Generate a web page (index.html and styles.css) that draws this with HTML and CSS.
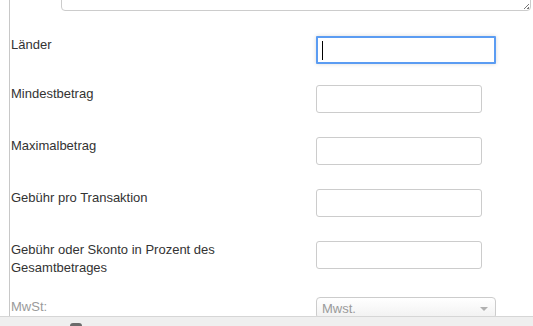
FILE: index.html
```html
<!DOCTYPE html>
<html lang="de">
<head>
    <meta charset="UTF-8" />
    <title>Zahlungsart bearbeiten</title>
    <link rel="stylesheet" href="styles.css">
</head>
<body>
<div class="panel">
    <div class="textarea-row">
        <div class="textarea"><span class="grip"></span></div>
    </div>

    <div class="form-row row-tight">
        <label class="label">Länder</label>
        <div class="field field-focus"><span class="caret"></span></div>
    </div>
    <div class="form-row">
        <label class="label">Mindestbetrag</label>
        <div class="field"></div>
    </div>
    <div class="form-row">
        <label class="label">Maximalbetrag</label>
        <div class="field"></div>
    </div>
    <div class="form-row">
        <label class="label">Gebühr pro Transaktion</label>
        <div class="field"></div>
    </div>
    <div class="form-row row-tight">
        <label class="label">Gebühr oder Skonto in Prozent des Gesamtbetrages</label>
        <div class="field"></div>
    </div>
    <div class="form-row">
        <label class="label label-muted">MwSt:</label>
        <div class="select">
            <span>Mwst.</span>
            <span class="arrow"></span>
        </div>
    </div>
</div>
<div class="statusbar"><span class="knob"></span></div>
</body>
</html>
```

FILE: styles.css
```css
:root {
    --texto: #333;
    --texto-fraco: #9a9a9a;
    --borda: #cccccc;
    --foco: #5b9cf2;
}

html, body {
    margin: 0;
    height: 100%;
    overflow: hidden;
    background: #fff;
    font-family: "Liberation Sans", Arial, sans-serif;
    font-size: 13px;
    color: var(--texto);
}

.panel {
    display: flow-root;
    margin-left: 9px;
    border-left: 1px solid #c8c8c8;
    height: 316px;
    padding-left: 1px;
    box-sizing: border-box;
    overflow: hidden;
}

.textarea-row {
    padding-left: 50px;
    margin-bottom: 25px;
}

.textarea {
    position: relative;
    height: 40px;
    margin-top: -29px;
    margin-right: 2px;
    border: 1px solid var(--borda);
    border-radius: 4px;
    box-sizing: border-box;
}

.grip {
    position: absolute;
    right: 1px;
    bottom: 1px;
    width: 5px;
    height: 5px;
    background: linear-gradient(135deg, transparent 45%, #777 45%, #777 58%, transparent 58%, transparent 75%, #777 75%);
}

.form-row {
    display: grid;
    grid-template-columns: 305px auto;
    align-items: start;
    margin-bottom: 24px;
}

.row-tight {
    margin-bottom: 21px;
}

.label {
    line-height: 18px;
    padding-right: 70px;
}

.label-muted {
    color: var(--texto-fraco);
}

.field {
    width: 166px;
    height: 28px;
    border: 1px solid var(--borda);
    border-radius: 3px;
    box-sizing: border-box;
    background: #fff;
}

.field-focus {
    width: 180px;
    border: 2px solid var(--foco);
    border-radius: 1px;
    box-shadow: 0 0 4px rgba(0, 0, 0, 0.15);
    padding: 3px 0 0 4px;
}

.caret {
    display: block;
    width: 1px;
    height: 19px;
    background: #000;
}

.select {
    display: flex;
    align-items: center;
    justify-content: space-between;
    width: 180px;
    height: 22px;
    padding: 0 7px 0 5px;
    margin-top: -1px;
    border: 1px solid var(--borda);
    border-radius: 4px;
    box-sizing: border-box;
    background: linear-gradient(#ffffff, #f1f1f1);
    color: var(--texto-fraco);
}

.arrow {
    width: 0;
    height: 0;
    border-left: 4px solid transparent;
    border-right: 4px solid transparent;
    border-top: 4px solid #b0b0b0;
    margin-top: 1px;
}

.statusbar {
    position: relative;
    height: 10px;
    background: #efefef;
    border-top: 1px solid #d6d6d6;
}

.knob {
    position: absolute;
    left: 70px;
    top: 6px;
    width: 12px;
    height: 8px;
    border-radius: 3px;
    background: #6b6b6b;
}
```
